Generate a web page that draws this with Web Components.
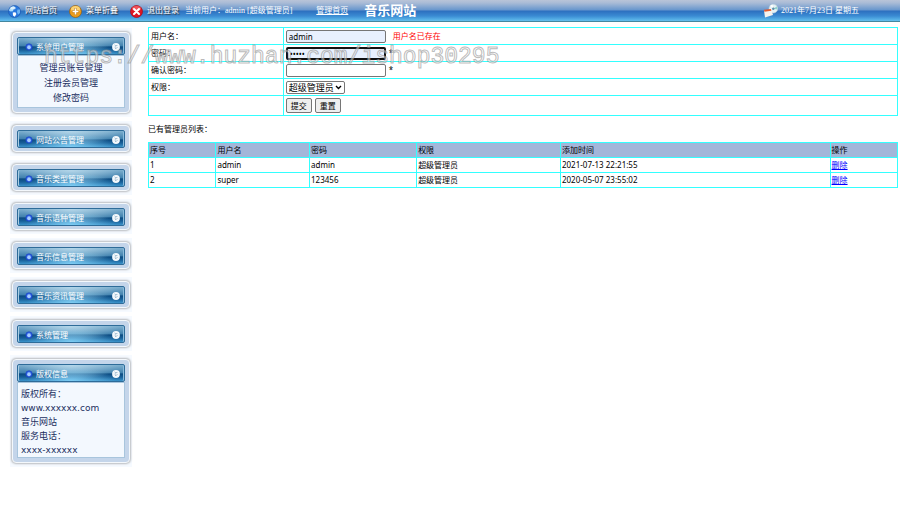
<!DOCTYPE html>
<html lang="zh-CN">
<head>
<meta charset="utf-8">
<title>音乐网站</title>
<style>
  body {
    margin: 0;
    background: #fff;
    color: #000;
    font: 8px/10px "Noto Sans", "Noto Sans CJK SC", sans-serif;
  }
</style>
</head>
<body>
<admin-page></admin-page>

<script>
class ToolLink extends HTMLElement {
  constructor() {
    super();
    this.attachShadow({ mode: 'open' });
    this.shadowRoot.innerHTML = `
      <style>
        :host { display: block; }
        a {
          display: flex;
          align-items: center;
          gap: 4px;
          color: #fff;
          text-decoration: none;
          text-shadow: 1px 1px 1px #333;
          white-space: nowrap;
        }
        ::slotted(svg) { width: 13px; height: 13px; }
      </style>
      <a href="#"><slot name="icon"></slot><slot></slot></a>
    `;
  }
}
customElements.define('tool-link', ToolLink);

class TopBar extends HTMLElement {
  constructor() {
    super();
    this.attachShadow({ mode: 'open' });
    this.shadowRoot.innerHTML = `
      <style>
        :host {
          display: flex;
          align-items: center;
          box-sizing: border-box;
          height: 22px;
          padding: 1px 41px 0 8px;
          border-bottom: 1px solid #43879f;
          color: #fff;
          background: linear-gradient(#b9c4d8 0, #a9bbd6 3px, #6796cd 10px, #2d6fbf 11px, #3a8bd3 16px, #63c0ee 21px);
          font-family: "Liberation Serif", "Noto Sans CJK SC", serif;
          white-space: nowrap;
        }
        .tools { display: flex; gap: 12px; }
        .user { margin-left: 6px; }
        .home { margin-left: 24px; color: #fff; }
        h1 {
          margin: 0 auto 0 16px;
          font-size: 13px;
          line-height: 20px;
        }
        .date { display: flex; align-items: center; gap: 3px; }
        .date svg { width: 14px; height: 14px; }
      </style>
      <nav class="tools">
        <tool-link>
          <svg slot="icon" viewBox="0 0 13 13">
            <circle cx="6.5" cy="6.5" r="6" fill="#2877dc" stroke="#1c56ae" stroke-width=".6"/>
            <path d="M1.4 4Q3 1 6 1.2L7.5 3 5.5 4.2 5 6.2 2.6 6.6 1 5.6Z" fill="#a9dcfb"/>
            <path d="M9.5 4.5L12 4.6 12 8 10 9.6 9 7Z" fill="#6db4f3"/>
            <path d="M4.8 7.5L7.4 7.3 8.4 9 6.8 11.8 5 10.4Z" fill="#fff"/>
            <ellipse cx="5" cy="3" rx="2.8" ry="1.6" fill="#fff" opacity=".6"/>
          </svg>
          网站首页
        </tool-link>
        <tool-link>
          <svg slot="icon" viewBox="0 0 13 13">
            <circle cx="6.5" cy="6.5" r="6" fill="#eb9c1c" stroke="#8e5b18" stroke-width=".7"/>
            <ellipse cx="6.5" cy="4" rx="4.5" ry="3" fill="#ffe08b" opacity=".8"/>
            <path d="M6.5 3.2V9.8M3.2 6.5H9.8" stroke="#c27a12" stroke-width="2.6"/>
            <path d="M6.5 3.6V9.4M3.6 6.5H9.4" stroke="#fff" stroke-width="1.6"/>
          </svg>
          菜单折叠
        </tool-link>
        <tool-link>
          <svg slot="icon" viewBox="0 0 13 13">
            <circle cx="6.5" cy="6.5" r="6" fill="#df1624" stroke="#a50b17" stroke-width=".7"/>
            <ellipse cx="6.5" cy="3.5" rx="4.5" ry="2.5" fill="#ff7d80" opacity=".6"/>
            <path d="M4 4L9 9M9 4L4 9" stroke="#fff" stroke-width="2" stroke-linecap="round"/>
          </svg>
          退出登录
        </tool-link>
      </nav>
      <span class="user">当前用户：admin [超级管理员]</span>
      <a class="home" href="#">管理首页</a>
      <h1>音乐网站</h1>
      <div class="date">
        <svg viewBox="0 0 14 14">
          <circle cx="9.3" cy="4.7" r="4.4" fill="#e6f1f4" stroke="#b5cdd8" stroke-width=".5"/>
          <path d="M9.3 4.7L12.8 2.4 13.5 5.6Z" fill="#8fd3cb"/>
          <path d="M9.3 4.7L6.2 1.8 8.5.6Z" fill="#fff"/>
          <circle cx="9.3" cy="4.7" r="1.2" fill="#5c8ba8"/>
          <path d="M0 6.5L7.5 6 9 11 1 13.5Z" fill="#f7f3ee"/>
          <path d="M0 5.8L6.8 5 7.4 6.8.4 7.8Z" fill="#e35b2e"/>
        </svg>
        <span>2021年7月23日 星期五</span>
      </div>
    `;
  }
}
customElements.define('top-bar', TopBar);

class SidePanel extends HTMLElement {
  constructor() {
    super();
    this.heading = this.getAttribute('heading');
    this.attachShadow({ mode: 'open' });
    this.shadowRoot.innerHTML = `
      <style>
        :host {
          display: block;
          padding: 4px 2px;
          background: #f6faff;
        }
        .frame {
          padding: 4px;
          border: 1px solid #f4f8fc;
          border-radius: 4px;
          background: #c4d5ea padding-box;
          box-shadow: 0 0 2px 1px #b9bcc0;
        }
        button {
          display: flex;
          align-items: center;
          box-sizing: border-box;
          width: 100%;
          height: 18px;
          margin-bottom: -1px;
          padding: 2px 4px 0 7px;
          border: 1px solid #2e6c99;
          border-radius: 2px;
          color: #fff;
          font: inherit;
          background:
            radial-gradient(ellipse at 50% 100%, #8fdcffcc, transparent 60%),
            radial-gradient(ellipse at 50% 0, #d0ebf8aa, transparent 65%),
            linear-gradient(#7fb0cf 0, #3f80ad 50%, #0b4a80 55%, #175f98 75%, #3a93cb 100%);
          box-shadow: inset 1px 0 #a9cde4, inset -1px 0 #8abbdc;
        }
        svg { width: 8px; height: 8px; flex: none; }
        span { flex: 1; margin-left: 3px; text-align: left; }
        .body {
          display: none;
          margin-top: 1px;
          padding: 5px 4px 1px;
          background: #f3f8fe;
          box-shadow: inset 0 0 0 1px #a8c5dd;
          color: #1b2f5e;
          font: 9px/14px "DejaVu Sans", "Noto Sans CJK SC", sans-serif;
        }
        :host([open]) .body { display: block; }
        :host([menu]) .body { padding: 6px 4px 2px; line-height: 15px; text-align: center; }
        ::slotted(*) { display: block; color: inherit; text-decoration: none; }
      </style>
      <div class="frame">
        <button type="button">
          <svg viewBox="0 0 8 8">
            <circle cx="4" cy="4" r="3.2" fill="#2f63e8" stroke="#1a43bd" stroke-width=".7"/>
            <ellipse cx="4" cy="4.3" rx="1.8" ry="2" fill="#a4cdff"/>
          </svg>
          <span>${this.heading}</span>
          <svg viewBox="0 0 8 8">
            <circle cx="4" cy="4" r="3.9" fill="#f3f8fc"/>
            <path d="M2.7 2L4 3.3 5.3 2M2.7 4.3L4 5.6 5.3 4.3" fill="none" stroke="#5d8bab" stroke-width=".7"/>
          </svg>
        </button>
        <div class="body"><slot></slot></div>
      </div>
    `;
    this.shadowRoot.querySelector('button').addEventListener('click', () => this.toggleAttribute('open'));
  }
}
customElements.define('side-panel', SidePanel);

class AdminForm extends HTMLElement {
  constructor() {
    super();
    this.attachShadow({ mode: 'open' });
    this.shadowRoot.innerHTML = `
      <style>
        :host { display: block; }
        form { margin: 0; }
        table {
          width: 100%;
          height: 89px;
          border-collapse: collapse;
          table-layout: fixed;
        }
        td { padding: 0 2px; border: 1px solid #3ff; }
        td div { display: flex; align-items: center; gap: 3px; }
        input, select, button {
          box-sizing: border-box;
          margin: 0;
          border: 1px solid #767676;
          border-radius: 2px;
          color: #000;
          font: inherit;
        }
        input { width: 100px; height: 13px; padding: 0 2px; background: #fff; }
        .filled { background: #e8f0fe; }
        .active { border: 2px solid #101010; outline: none; }
        .error { margin-left: 4px; color: #f00; }
        .select { position: relative; }
        select {
          width: 59px;
          height: 13px;
          padding: 0 2px;
          appearance: none;
          background: #fff;
          font-size: 9px;
          line-height: 11px;
        }
        .select svg {
          position: absolute;
          right: 3px;
          top: 4px;
          width: 7px;
          height: 5px;
          pointer-events: none;
        }
        button { width: 26px; height: 15px; padding: 0; background: #efefef; }
      </style>
      <form>
        <table>
          <colgroup><col style="width: 18%"><col></colgroup>
          <tr>
            <td><label for="user">用户名：</label></td>
            <td><div><input id="user" class="filled" type="text" value="admin"><span class="error">用户名已存在</span></div></td>
          </tr>
          <tr>
            <td><label for="pass">密码：</label></td>
            <td><div><input id="pass" class="filled active" type="password" value="admin"><span>*</span></div></td>
          </tr>
          <tr>
            <td><label for="again">确认密码：</label></td>
            <td><div><input id="again" type="password"><span>*</span></div></td>
          </tr>
          <tr>
            <td><label for="role">权限：</label></td>
            <td><div><span class="select"><select id="role"><option>超级管理员</option></select><svg viewBox="0 0 7 5"><path d="M1 1L3.5 3.5 6 1" fill="none" stroke="#000" stroke-width="1.4"/></svg></span></div></td>
          </tr>
          <tr>
            <td></td>
            <td><div><button type="button">提交</button><button type="reset">重置</button></div></td>
          </tr>
        </table>
      </form>
    `;
  }
}
customElements.define('admin-form', AdminForm);

class AdminList extends HTMLElement {
  constructor() {
    super();
    this.attachShadow({ mode: 'open' });
    this.rows = [
      ['1', 'admin', 'admin', '超级管理员', '2021-07-13 22:21:55'],
      ['2', 'super', '123456', '超级管理员', '2020-05-07 23:55:02']
    ];
    this.shadowRoot.innerHTML = `
      <style>
        :host { display: block; }
        p { margin: 0; line-height: 26px; }
        table { width: 100%; border-collapse: collapse; table-layout: fixed; }
        th, td {
          height: 14px;
          padding: 0 1px;
          border: 1px solid #3ff;
          font-weight: normal;
          text-align: left;
        }
        th { background: #a3b6d9; }
        a { color: #00f; }
      </style>
      <p>已有管理员列表：</p>
      <table>
        <colgroup>
          <col style="width: 9%"><col style="width: 12.5%"><col style="width: 14.3%">
          <col style="width: 19.2%"><col style="width: 36%"><col style="width: 9%">
        </colgroup>
        <tr><th>序号</th><th>用户名</th><th>密码</th><th>权限</th><th>添加时间</th><th>操作</th></tr>
        ${this.rows.map(row => `<tr>${row.map(v => `<td>${v}</td>`).join('')}<td><a href="#">删除</a></td></tr>`).join('')}
      </table>
    `;
  }
}
customElements.define('admin-list', AdminList);

class WaterMark extends HTMLElement {
  constructor() {
    super();
    this.attachShadow({ mode: 'open' });
    this.shadowRoot.innerHTML = `
      <style>
        :host {
          position: absolute;
          left: 44px;
          top: 44px;
          color: #ffffff77;
          font: 23px/26px "Liberation Mono", monospace;
          -webkit-text-stroke: 1px #8c8c8c99;
          white-space: nowrap;
          pointer-events: none;
        }
      </style>
      <slot></slot>
    `;
  }
}
customElements.define('water-mark', WaterMark);

class AdminPage extends HTMLElement {
  constructor() {
    super();
    this.attachShadow({ mode: 'open' });
    this.shadowRoot.innerHTML = `
      <style>
        :host { display: block; position: relative; }
        .content { display: flex; gap: 16px; padding: 5px 2px 0 10px; }
        aside {
          display: flex;
          flex-direction: column;
          flex: none;
          gap: 4px;
          width: 122px;
          padding-top: 1px;
        }
        main { flex: 1; min-width: 0; }
      </style>
      <top-bar></top-bar>
      <div class="content">
        <aside>
          <side-panel heading="系统用户管理" open menu>
            <a href="#">管理员账号管理</a>
            <a href="#">注册会员管理</a>
            <a href="#">修改密码</a>
          </side-panel>
          <side-panel heading="网站公告管理"></side-panel>
          <side-panel heading="音乐类型管理"></side-panel>
          <side-panel heading="音乐语种管理"></side-panel>
          <side-panel heading="音乐信息管理"></side-panel>
          <side-panel heading="音乐资讯管理"></side-panel>
          <side-panel heading="系统管理"></side-panel>
          <side-panel heading="版权信息" open>
            <div>版权所有：</div>
            <div>www.xxxxxx.com</div>
            <div>音乐网站</div>
            <div>服务电话：</div>
            <div>xxxx-xxxxxx</div>
          </side-panel>
        </aside>
        <main>
          <admin-form></admin-form>
          <admin-list></admin-list>
        </main>
      </div>
      <water-mark>https://www.huzhan.com/ishop30295</water-mark>
    `;
  }
}
customElements.define('admin-page', AdminPage);
</script>
</body>
</html>
